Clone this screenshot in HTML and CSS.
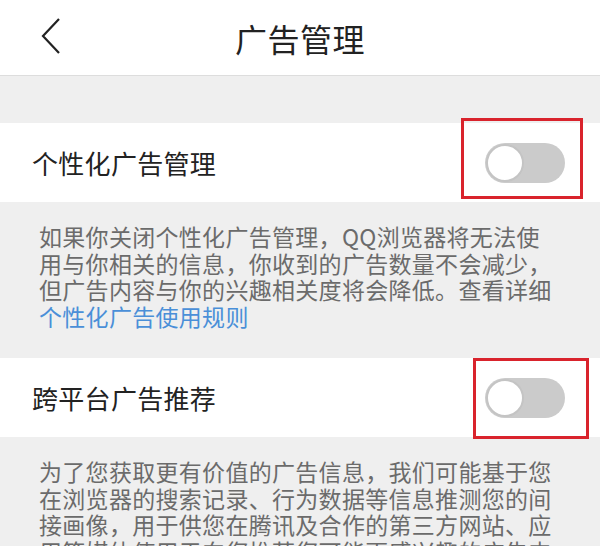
FILE: index.html
```html
<!DOCTYPE html>
<html lang="zh-CN">
<head>
    <meta charset="UTF-8">
    <meta name="viewport" content="width=device-width, initial-scale=1.0">
    <title>广告管理</title>
    <link rel="stylesheet" href="styles.css">
</head>
<body>
    <header class="top-bar">
        <a class="back-btn" href="#">
            <svg width="24" height="40" viewBox="0 0 24 40">
                <polyline points="19,3 3,20 19,37" fill="none" stroke="#222" stroke-width="2.2" stroke-linejoin="miter"/>
            </svg>
        </a>
        <h1 class="title">广告管理</h1>
    </header>

    <div class="spacer"></div>

    <div class="setting-row">
        <span class="setting-name">个性化广告管理</span>
        <div class="switch"><span class="knob"></span></div>
        <div class="mark mark-first"></div>
    </div>
    <p class="setting-desc">
        如果你关闭个性化广告管理，QQ浏览器将无法使用与你相关的信息，你收到的广告数量不会减少，但广告内容与你的兴趣相关度将会降低。查看详细<a href="#" class="link">个性化广告使用规则</a>
    </p>

    <div class="setting-row">
        <span class="setting-name">跨平台广告推荐</span>
        <div class="switch"><span class="knob"></span></div>
        <div class="mark mark-second"></div>
    </div>
    <p class="setting-desc">
        为了您获取更有价值的广告信息，我们可能基于您在浏览器的搜索记录、行为数据等信息推测您的间接画像，用于供您在腾讯及合作的第三方网站、应<br>用等媒体使用于向您推荐您可能更感兴趣的广告内容。
    </p>
</body>
</html>
```

FILE: styles.css
```css
body {
    margin: 0;
    background-color: #efefef;
    font-family: "Noto Sans CJK SC", "Noto Sans", sans-serif;
    overflow: hidden;
}

.top-bar {
    height: 75px;
    background-color: #fff;
    border-bottom: 1px solid #dddddd;
    display: flex;
    align-items: center;
    justify-content: center;
    position: relative;
}

.back-btn {
    position: absolute;
    left: 40px;
    top: 16px;
    display: block;
}

.title {
    margin: 0;
    font-size: 32px;
    font-weight: normal;
    color: #222;
    letter-spacing: 0.5px;
}

.spacer {
    height: 47px;
}

.setting-row {
    height: 79px;
    background-color: #fff;
    display: flex;
    align-items: center;
    justify-content: space-between;
    padding: 0 35px 0 32px;
    position: relative;
}

.setting-name {
    font-size: 26px;
    color: #222;
    letter-spacing: 0.3px;
}

.switch {
    width: 80px;
    height: 40px;
    border-radius: 20px;
    background-color: #cbcbcb;
    position: relative;
}

.knob {
    position: absolute;
    left: 1px;
    top: 1px;
    width: 34px;
    height: 34px;
    border-radius: 50%;
    background-color: #fff;
    border: 2px solid #c4c4c4;
}

.mark {
    position: absolute;
    border: 3px solid #d9232c;
}

.mark-first {
    left: 461px;
    top: -5px;
    width: 116px;
    height: 75px;
}

.mark-second {
    left: 473px;
    top: 0;
    width: 110px;
    height: 75px;
}

.setting-desc {
    margin: 0;
    height: 156px;
    box-sizing: border-box;
    padding: 21px 46px 0 39px;
    font-size: 23px;
    letter-spacing: 0.3px;
    line-height: 26.5px;
    color: #6b6b6b;
}

.link {
    color: #4a8fd8;
    text-decoration: none;
}
```
